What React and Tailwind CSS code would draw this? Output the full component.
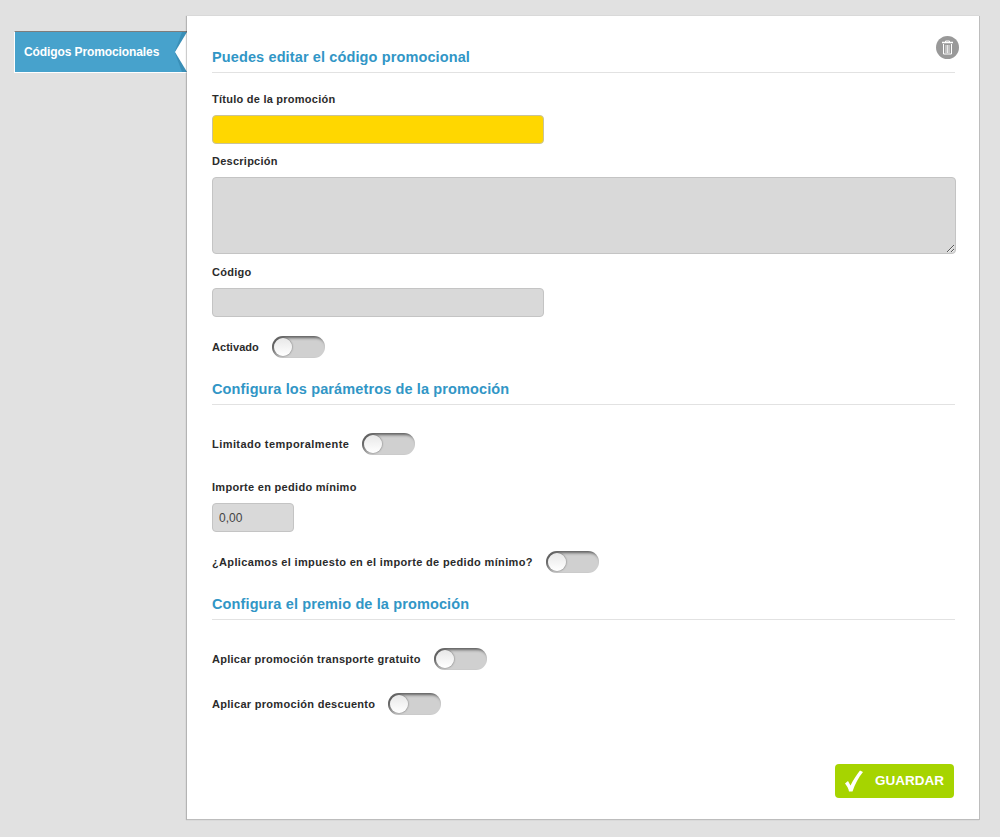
import { useState } from 'react';

const Toggle = () => (
  <div className="relative w-[53px] h-[22px] rounded-full bg-[#d0d0d0] shadow-[inset_2px_2px_3px_rgba(0,0,0,0.55)]">
    <div className="absolute left-[2px] top-[2px] w-[18px] h-[18px] rounded-full bg-gradient-to-b from-[#e8e8e8] to-white shadow-[0_0_2px_rgba(0,0,0,0.6)]" />
  </div>
);

const SectionTitle = ({ children, className = '' }) => (
  <h2 className={`h-[26px] border-b border-[#e2e2e2] text-[14.5px] leading-[20px] font-bold tracking-[0.12px] text-[#3196c6] ${className}`}>
    {children}
  </h2>
);

const Label = ({ children, className = 'tracking-[0.25px]' }) => (
  <label className={`block text-[11px] leading-[16px] font-bold text-[#2b2b2b] ${className}`}>{children}</label>
);

const ToggleRow = ({ label, tracking, className = '' }) => (
  <div className={`flex items-center gap-[13px] h-[22px] ${className}`}>
    <Label className={tracking}>{label}</Label>
    <Toggle />
  </div>
);

const fieldClass = 'block rounded-[4px] border border-[#c4c4c4] bg-[#d9d9d9] outline-none';

export default function App() {
  const [minimo, setMinimo] = useState('0,00');

  return (
    <div className="min-h-[837px] bg-[#e1e1e1] font-['Liberation_Sans',Arial,sans-serif]">
      <div className="flex items-start pl-[14px] pt-[16px]">
        <div className="relative mt-[15px] w-[173px] h-[42px] bg-[#47a2cc] border-t border-t-[#7d7d7d] border-l border-l-white border-b border-b-white pl-[9px] flex items-center">
          <span className="text-[12px] font-bold tracking-[-0.1px] text-white">Códigos Promocionales</span>
          <svg className="absolute right-0 top-0" width="14" height="40" viewBox="0 0 14 40">
            <polygon points="14,0 9,0 2,19 14,19" fill="#2f7fa6" opacity="0.55" />
            <polygon points="14,40 9,40 2,21 14,21" fill="#2f7fa6" opacity="0.55" />
            <polygon points="14,0 2,20 14,40" fill="#ffffff" />
          </svg>
        </div>

        <main className="relative w-[793px] h-[804px] bg-white border-r border-b border-[#bdbdbd] shadow-[-1px_0_1px_rgba(0,0,0,0.2)] pl-[25px] pr-[24px] pt-[31px]">
          <div className="absolute right-[20px] top-[20px] w-[23px] h-[23px] rounded-full bg-[#999999] flex items-center justify-center">
            <svg width="13" height="15" viewBox="0 0 13 15" fill="none" stroke="#ffffff">
              <path d="M1 2.5h11" strokeWidth="1.5" />
              <path d="M4.5 2V1h4v1" strokeWidth="1" />
              <path d="M2.5 4v10h8V4" strokeWidth="1" />
              <path d="M5 5v8M6.5 5v8M8 5v8" strokeWidth="0.8" />
            </svg>
          </div>

          <SectionTitle>Puedes editar el código promocional</SectionTitle>

          <Label className="mt-[18px] tracking-[0.25px]">Título de la promoción</Label>
          <input className={`${fieldClass} mt-[8px] w-[332px] h-[29px] bg-[#ffd700] border-[#c9c39a]`} />

          <Label className="mt-[9px] tracking-[0.25px]">Descripción</Label>
          <textarea className={`${fieldClass} mt-[8px] w-[744px] h-[77px] resize-y`} />

          <Label className="mt-[10px] tracking-[0.25px]">Código</Label>
          <input className={`${fieldClass} mt-[8px] w-[332px] h-[29px]`} />

          <ToggleRow label="Activado" tracking="tracking-[0.05px]" className="mt-[19px]" />

          <SectionTitle className="mt-[21px]">Configura los parámetros de la promoción</SectionTitle>

          <ToggleRow label="Limitado temporalmente" tracking="tracking-[0.44px]" className="mt-[28px]" />

          <Label className="mt-[24px] tracking-[0.3px]">Importe en pedido mínimo</Label>
          <input
            value={minimo}
            onChange={(e) => setMinimo(e.target.value)}
            className={`${fieldClass} mt-[8px] w-[82px] h-[29px] px-[6px] text-[12px] text-[#444444]`}
          />

          <ToggleRow label="¿Aplicamos el impuesto en el importe de pedido mínimo?" tracking="tracking-[0.35px]" className="mt-[19px]" />

          <SectionTitle className="mt-[21px]">Configura el premio de la promoción</SectionTitle>

          <ToggleRow label="Aplicar promoción transporte gratuito" tracking="tracking-[0.27px]" className="mt-[28px]" />
          <ToggleRow label="Aplicar promoción descuento" tracking="tracking-[0.3px]" className="mt-[23px]" />

          <div className="flex justify-end mt-[49px] pr-px">
            <button className="flex items-center w-[119px] h-[34px] rounded-[4px] bg-[#a6d400] pl-[9px] text-[13.5px] font-bold text-white">
              <svg width="20" height="22" viewBox="0 0 20 22" className="mr-[11px]">
                <path d="M1 13.5l3-2.5 2.5 4.5C9 10 12.5 5 16 0.5l3 1.5C14.5 7.5 11 14 8.5 21.5H5C4.5 18.5 3 16 1 13.5z" fill="#ffffff" />
              </svg>
              GUARDAR
            </button>
          </div>
        </main>
      </div>
    </div>
  );
}
